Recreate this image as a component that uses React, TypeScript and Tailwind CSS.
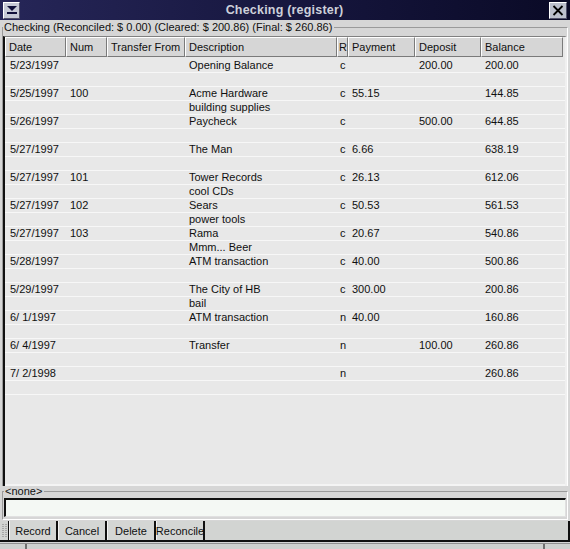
import React from "react"

type Txn = {
  date: string
  num?: string
  desc?: string
  r: string
  payment?: string
  deposit?: string
  balance: string
  memo?: string
}

const txns: Txn[] = [
  { date: "5/23/1997", desc: "Opening Balance", r: "c", deposit: "200.00", balance: "200.00" },
  { date: "5/25/1997", num: "100", desc: "Acme Hardware", r: "c", payment: "55.15", balance: "144.85", memo: "building supplies" },
  { date: "5/26/1997", desc: "Paycheck", r: "c", deposit: "500.00", balance: "644.85" },
  { date: "5/27/1997", desc: "The Man", r: "c", payment: "6.66", balance: "638.19" },
  { date: "5/27/1997", num: "101", desc: "Tower Records", r: "c", payment: "26.13", balance: "612.06", memo: "cool CDs" },
  { date: "5/27/1997", num: "102", desc: "Sears", r: "c", payment: "50.53", balance: "561.53", memo: "power tools" },
  { date: "5/27/1997", num: "103", desc: "Rama", r: "c", payment: "20.67", balance: "540.86", memo: "Mmm... Beer" },
  { date: "5/28/1997", desc: "ATM transaction", r: "c", payment: "40.00", balance: "500.86" },
  { date: "5/29/1997", desc: "The City of HB", r: "c", payment: "300.00", balance: "200.86", memo: "bail" },
  { date: "6/ 1/1997", desc: "ATM transaction", r: "n", payment: "40.00", balance: "160.86" },
  { date: "6/ 4/1997", desc: "Transfer", r: "n", deposit: "100.00", balance: "260.86" },
  { date: "7/ 2/1998", r: "n", balance: "260.86" },
]

// column widths in px: Date, Num, Transfer From, Description, R, Payment, Deposit, Balance
const HeaderCell = ({ w, children }: { w: string; children?: React.ReactNode }) => (
  <div
    className={`${w} h-full shrink-0 flex items-center pl-[3px] bg-[#d6d6d6] border-t border-l border-t-white border-l-white border-r border-b border-r-[#7a7a7a] border-b-[#7a7a7a] whitespace-nowrap overflow-hidden`}
  >
    {children}
  </div>
)

const Line = ({ cells }: { cells: (string | undefined)[] }) => (
  <div className="flex h-[14px] border-b border-[#f7f7f7] leading-[13px] whitespace-pre">
    <div className="w-[61px] shrink-0 pl-[5px]">{cells[0]}</div>
    <div className="w-[41px] shrink-0 pl-[4px]">{cells[1]}</div>
    <div className="w-[78px] shrink-0 pl-[4px]">{cells[2]}</div>
    <div className="w-[152px] shrink-0 pl-[4px]">{cells[3]}</div>
    <div className="w-[11px] shrink-0 pl-[3px]">{cells[4]}</div>
    <div className="w-[67px] shrink-0 pl-[4px]">{cells[5]}</div>
    <div className="w-[66px] shrink-0 pl-[4px]">{cells[6]}</div>
    <div className="w-[82px] shrink-0 pl-[4px]">{cells[7]}</div>
  </div>
)

export default function App() {
  return (
    <div className="w-[570px] h-[549px] bg-[#d6d6d6] flex flex-col overflow-hidden font-['Liberation_Sans',Arial,sans-serif] text-[11px] text-[#101010]">
      {/* title bar */}
      <div className="h-[20px] shrink-0 flex items-center px-[3px] bg-[linear-gradient(to_right,#262658,#14143a_60%,#0a0a26)]">
        <div className="w-[17px] h-[17px] bg-[#c6cad6] border border-t-white border-l-white border-r-[#50506a] border-b-[#50506a] flex flex-col items-center justify-center gap-[1px]">
          <div className="w-0 h-0 border-l-[5px] border-r-[5px] border-t-[5px] border-l-transparent border-r-transparent border-t-[#10103a]" />
          <div className="w-[10px] h-[2px] bg-[#10103a]" />
        </div>
        <div className="flex-1 text-center font-bold text-[12.5px] text-[#cdd0da] tracking-[0.2px]">Checking (register)</div>
        <div className="w-[18px] h-[17px] bg-[#bcc0cc] border border-t-white border-l-white border-r-[#50506a] border-b-[#50506a] flex items-center justify-center">
          <svg width="12" height="11" viewBox="0 0 12 11">
            <path d="M1.5 1 L10.5 10 M10.5 1 L1.5 10" stroke="#000" strokeWidth="1.8" />
          </svg>
        </div>
      </div>

      {/* register frame */}
      <fieldset className="h-[465px] mt-[1px] shrink-0 mx-[2px] border-t border-l border-r border-t-[#9a9a9a] border-l-[#9a9a9a] border-r-white">
        <legend className="leading-[13px] pl-[1px] pr-[2px] whitespace-pre">Checking (Reconciled: $ 0.00) (Cleared: $ 200.86) (Final: $ 260.86)</legend>
        <div className="h-[450px] mt-[2px] flex flex-col border-l-2 border-t border-l-[#101010] border-t-[#808080] border-r-2 border-r-[#f0f0f0] bg-[#e8e8e8]">
          <div className="h-[20px] flex shrink-0">
            <HeaderCell w="w-[61px]">Date</HeaderCell>
            <HeaderCell w="w-[41px]">Num</HeaderCell>
            <HeaderCell w="w-[78px]">Transfer From</HeaderCell>
            <HeaderCell w="w-[152px]">Description</HeaderCell>
            <HeaderCell w="w-[11px] !pl-[1px]">R</HeaderCell>
            <HeaderCell w="w-[67px]">Payment</HeaderCell>
            <HeaderCell w="w-[66px]">Deposit</HeaderCell>
            <HeaderCell w="w-[82px]">Balance</HeaderCell>
          </div>
          <div className="pt-[2px]">
            {txns.map((t, i) => (
              <div key={i}>
                <Line cells={[t.date, t.num, "", t.desc, t.r, t.payment, t.deposit, t.balance]} />
                <Line cells={["", "", "", t.memo, "", "", "", ""]} />
              </div>
            ))}
          </div>
          <div className="flex-1 border-b-2 border-b-[#f4f4f4]" />
        </div>
      </fieldset>

      {/* notes frame */}
      <fieldset className="h-[34px] shrink-0 mx-[2px] border border-[#9a9a9a] border-r-white border-b-white px-[1px]">
        <legend className="leading-[11px] pl-[1px] pr-[2px]">&lt;none&gt;</legend>
        <div className="mt-[1px] h-[19px] bg-[#f4f8f4] border-t-2 border-l-2 border-t-[#101010] border-l-[#101010] border-r border-b border-r-[#e0e0e0] border-b-[#e0e0e0]" />
      </fieldset>

      {/* button bar */}
      <div className="h-[21px] mt-[1px] shrink-0 flex border-b-2 border-b-[#101010] border-r-2 border-r-[#101010] bg-[#d2d4d2]">
        <div className="w-[9px] h-full flex flex-col justify-center items-center gap-[1px] border-r border-r-[#101010]">
          {Array.from({ length: 7 }).map((_, i) => (
            <div key={i} className="w-[5px] h-[1px] border-l-2 border-r-2 border-[#a8a8a8]" />
          ))}
        </div>
        {["Record", "Cancel", "Delete", "Reconcile"].map((b) => (
          <div
            key={b}
            className="w-[49px] h-full flex items-center justify-center pt-[2px] border-r-2 border-r-[#101010] border-l border-l-[#f4f4f4] bg-[#d4d6d4]"
          >
            {b}
          </div>
        ))}
        <div className="flex-1" />
      </div>

      {/* status bar */}
      <div className="flex-1 flex mt-[1px] border-t border-t-[#909090]">
        <div className="w-[27px] border-r-2 border-r-[#707070] bg-[#cfd1cf]" />
        <div className="flex-1 border-r-2 border-r-[#707070] bg-[#cfd1cf]" />
        <div className="w-[25px] bg-[#cfd1cf]" />
      </div>
    </div>
  )
}
